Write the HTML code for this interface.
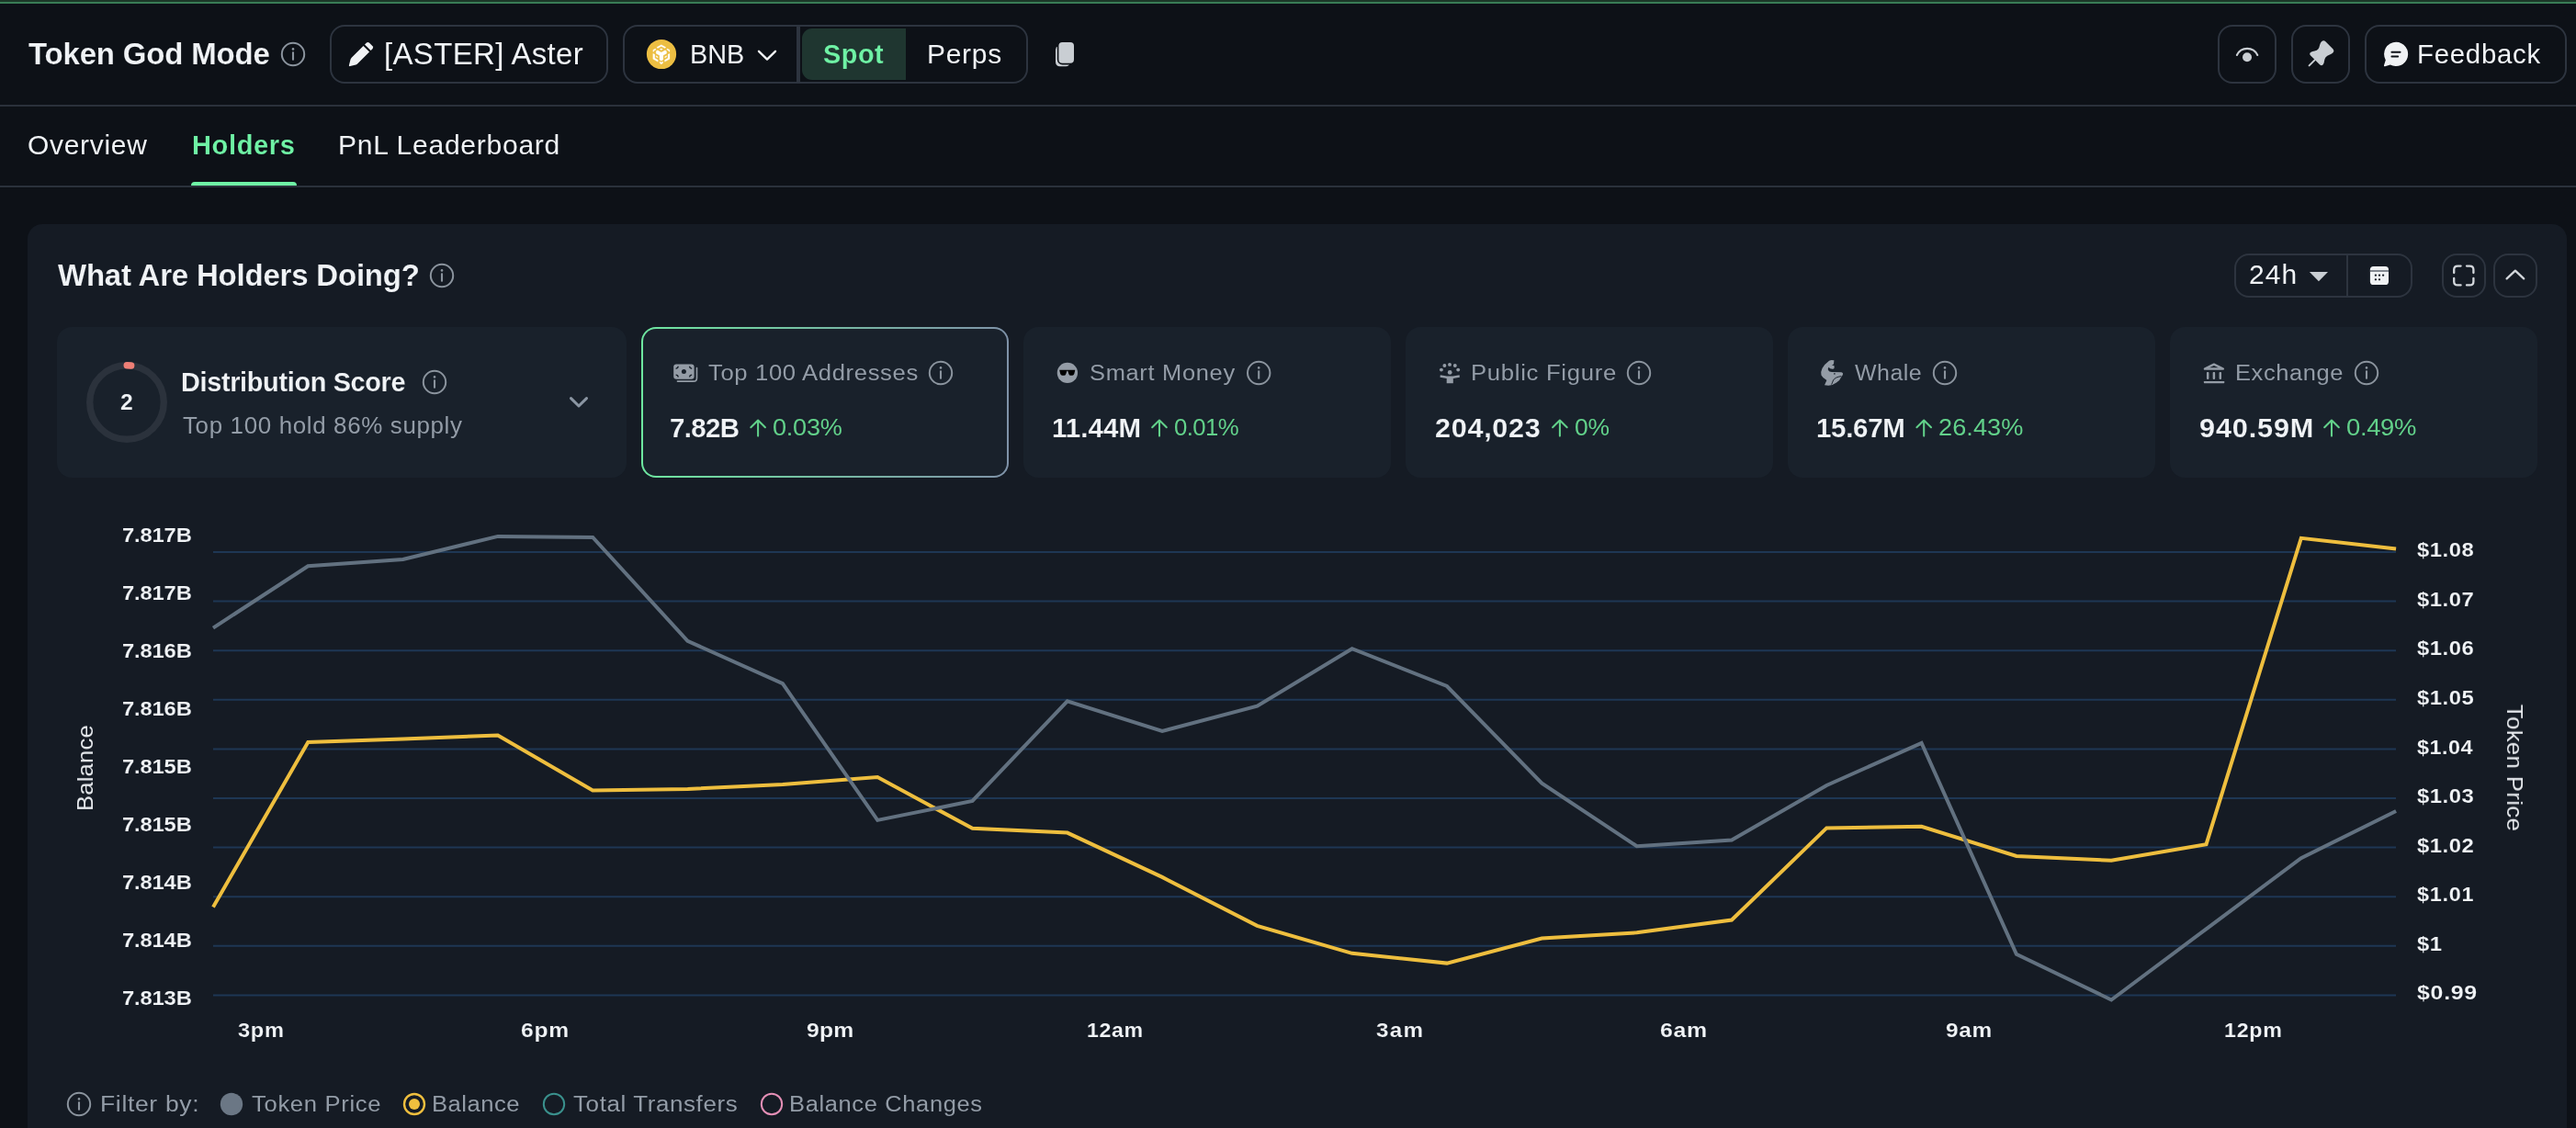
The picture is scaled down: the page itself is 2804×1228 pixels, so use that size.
<!DOCTYPE html>
<html lang="en"><head><meta charset="utf-8"><title>Token God Mode - Holders</title>
<style>
*{box-sizing:border-box;margin:0;padding:0}
html,body{width:2804px;height:1228px;overflow:hidden;background:#0d1117}
body{position:relative;font-family:"Liberation Sans",Arial,sans-serif;color:#f0f3f6}
.tx{position:absolute;white-space:nowrap;line-height:1;display:block;transform-origin:0 50%;will-change:transform}
.abs{position:absolute}
.btn{position:absolute;border:2px solid #2d343f;border-radius:16px;background:transparent}
.topline{position:absolute;left:0;top:0;width:2804px;height:4px;background:linear-gradient(#1c3829 0,#1c3829 50%,#397c55 50%,#397c55 100%)}
.hr{position:absolute;left:0;width:2804px;height:2px;background:#2a313b}
.panel{position:absolute;left:30px;top:244px;width:2764px;height:1000px;background:#151b24;border-radius:16px}
.card{position:absolute;top:356px;height:164px;width:400px;background:#19212b;border-radius:16px}
.card.active{background:linear-gradient(90deg,#6ee7a0,#7f92a8);}
.card.active::before{content:"";position:absolute;left:2px;top:2px;right:2px;bottom:2px;background:#19212b;border-radius:14px}
svg{position:absolute;overflow:visible}
.rot{position:absolute;white-space:nowrap;line-height:1;font-size:24px;color:#e6e9ed;transform-origin:center center;will-change:transform}
</style></head>
<body>
<div class="topline"></div>
<header>
<div class="btn" style="left:359px;top:27px;width:303px;height:64px"></div>
<div class="btn" style="left:678px;top:27px;width:191px;height:64px;border-radius:16px 0 0 16px"></div>
<div class="btn" style="left:869px;top:27px;width:250px;height:64px;border-radius:0 16px 16px 0"></div>
<div class="abs" style="left:873px;top:31px;width:113px;height:56px;background:#1f3630;border-radius:11px 0 0 11px"></div>
<div class="btn" style="left:2414px;top:27px;width:64px;height:64px"></div>
<div class="btn" style="left:2494px;top:27px;width:64px;height:64px"></div>
<div class="btn" style="left:2574px;top:27px;width:220px;height:64px"></div>
<span id="h_title" class="tx" style="left:31.00px;top:43.01px;font-size:32.96px;letter-spacing:-0.154px;color:#f0f3f6;font-weight:700;-webkit-text-stroke:0.12px #0d1117;">Token God Mode</span>
<span id="h_aster" class="tx" style="left:418.00px;top:43.01px;font-size:32.96px;letter-spacing:0.358px;color:#f0f3f6;">[ASTER] Aster</span>
<span id="h_bnb" class="tx" style="left:751.00px;top:45.01px;font-size:28.84px;letter-spacing:0.000px;color:#f0f3f6;">BNB</span>
<span id="h_spot" class="tx" style="left:896.00px;top:45.01px;font-size:28.84px;letter-spacing:0.533px;color:#6ff2a5;font-weight:700;-webkit-text-stroke:0.12px #1f3630;">Spot</span>
<span id="h_perps" class="tx" style="left:1009.00px;top:45.01px;font-size:28.84px;letter-spacing:0.673px;color:#f0f3f6;transform:scaleX(1.0401);">Perps</span>
<span id="h_feedback" class="tx" style="left:2631.00px;top:45.01px;font-size:28.84px;letter-spacing:0.721px;color:#f0f3f6;transform:scaleX(1.0189);">Feedback</span>
<svg width="2804" height="1228" viewBox="0 0 2804 1228" style="left:0;top:0;pointer-events:none" fill="none"><g stroke="#8b949e" stroke-width="2" fill="none"><circle cx="319" cy="59" r="12.2"/><line x1="319" y1="56.4" x2="319" y2="65.6" stroke-width="2.1"/></g><circle cx="319" cy="53.4" r="1.3" fill="#8b949e"/><path fill="#f0f2f4" d="M395.5,49.9 L402.1,56.6 L389.3,69.3 Q388.5,70.1 387.4,70.4 L381,72.1 Q379.6,72.4 379.9,71 L381.6,64.6 Q381.9,63.5 382.7,62.7 Z"/><path fill="#f0f2f4" d="M397,48.5 L399,46.5 Q400.4,45.3 401.9,46.6 L405.6,50.3 Q406.8,51.7 405.6,53.1 L403.6,55.1 Z"/><circle cx="720" cy="59" r="16.1" fill="#ecbe42"/><g transform="translate(700,40) scale(0.033698)" fill="#fff" stroke="#fff" stroke-width="8" stroke-linejoin="round"><polygon points="440,342 588,256 738,342 703,373 588,314 473,373"/><polygon points="540,405 588,379 636,405 588,431"/><polygon points="322,425 398,384 420,412 352,452 352,472 322,490"/><polygon points="858,425 782,384 760,412 828,452 828,472 858,490"/><polygon points="320,540 378,572 378,690 482,750 482,812 320,722"/><polygon points="860,540 802,572 802,690 698,750 698,812 860,722"/><polygon points="540,800 588,828 640,800 640,850 588,888 540,850"/><polygon points="422,612 478,645 478,684 422,651"/><polygon points="758,612 702,645 702,684 758,651"/><path d="M420,485 Q422,452 470,440 L590,508 L710,440 Q758,452 760,485 L760,540 L648,603 L648,745 L590,778 L532,745 L532,603 L420,540 Z"/></g><path d="M826,55.8 L835,64.6 L844,55.8" stroke="#f0f2f4" stroke-width="2.4" stroke-linecap="round" stroke-linejoin="round"/><rect x="1149" y="50" width="15.7" height="22.3" rx="4.5" fill="#c9ced3"/><rect x="1152.4" y="45.9" width="16.6" height="22.9" rx="4" fill="#c9ced3" stroke="#0d1117" stroke-width="3.2" paint-order="stroke"/><path d="M2434.9,60 A12.4,12.4 0 0 1 2457.3,60" stroke="#c9ced3" stroke-width="2.1" stroke-linecap="round"/><circle cx="2446" cy="62.2" r="5" fill="#c9ced3"/><path fill="#c9ced3" d="M2527,45.2 Q2529.3,43.2 2531.4,45.3 L2539.6,53.4 Q2541.3,55.3 2539.6,57.2 Q2538.2,58.7 2536,59.6 Q2532.8,60.8 2531.6,62.2 Q2530.4,63.6 2530,66.5 Q2529.8,68.6 2528.9,70 Q2527.2,72.3 2525.2,70.5 L2514.9,60.2 Q2513.2,58.2 2515.5,56.7 Q2517,55.8 2519.5,55.4 Q2522.2,55 2523.3,53.6 Q2524.5,52.2 2525.1,49 Q2525.6,46.6 2527,45.2 Z"/><path d="M2519.6,65.4 L2513.6,71.4" stroke="#c9ced3" stroke-width="2" stroke-linecap="round"/><path fill="#f0f2f4" d="M2608.2,45.8 A13.1,13.1 0 1 1 2601.8,70.4 L2596.2,72.2 Q2594.6,72.6 2595,71 L2596.8,65.4 A13.1,13.1 0 0 1 2608.2,45.8 Z"/><path d="M2603.4,56.8 H2612.6 M2603.4,61.5 H2610.2" stroke="#0d1117" stroke-width="1.9" stroke-linecap="round"/></svg>
</header>
<div class="hr" style="top:114px"></div>
<nav>
<span id="tab_overview" class="tx" style="left:30.00px;top:143.60px;font-size:28.84px;letter-spacing:0.694px;color:#f0f3f6;transform:scaleX(1.0390);">Overview</span>
<span id="tab_holders" class="tx" style="left:209.00px;top:143.60px;font-size:28.84px;letter-spacing:0.622px;color:#6ff2a5;font-weight:700;-webkit-text-stroke:0.12px #0d1117;transform:scaleX(1.0081);">Holders</span>
<span id="tab_pnl" class="tx" style="left:368.00px;top:143.60px;font-size:28.84px;letter-spacing:0.694px;color:#f0f3f6;transform:scaleX(1.0426);">PnL Leaderboard</span>
<div class="abs" style="left:208px;top:197.5px;width:115.4px;height:4.7px;background:#6ff2a5;border-radius:4px 4px 0 0;z-index:2"></div>
</nav>
<div class="hr" style="top:202px"></div>
<main>
<section class="panel"></section>
<span id="p_title" class="tx" style="left:63.00px;top:284.01px;font-size:32.96px;letter-spacing:-0.182px;color:#f0f3f6;font-weight:700;-webkit-text-stroke:0.12px #151b24;">What Are Holders Doing?</span>
<span id="p_24h" class="tx" style="left:2448.00px;top:285.22px;font-size:28.84px;letter-spacing:1.010px;color:#f0f3f6;transform:scaleX(1.0393);">24h</span>
<svg width="2804" height="1228" viewBox="0 0 2804 1228" style="left:0;top:0;pointer-events:none" fill="none"><g stroke="#8b949e" stroke-width="2" fill="none"><circle cx="481" cy="300" r="12.2"/><line x1="481" y1="297.4" x2="481" y2="306.6" stroke-width="2.1"/></g><circle cx="481" cy="294.4" r="1.3" fill="#8b949e"/><path d="M2513.9,296.1 H2534 L2523.95,306.2 Z" fill="#c9ced3"/><rect x="2579.9" y="289.9" width="20.1" height="20.1" rx="3.6" fill="#f0f2f4"/><rect x="2579.9" y="294.3" width="20.1" height="1.4" fill="#555c66"/><circle cx="2585.9" cy="299.7" r="1.15" fill="#151b24"/><circle cx="2590" cy="299.7" r="1.15" fill="#151b24"/><circle cx="2594.1" cy="299.7" r="1.15" fill="#151b24"/><circle cx="2585.9" cy="304.3" r="1.15" fill="#151b24"/><circle cx="2590" cy="304.3" r="1.15" fill="#151b24"/><g stroke="#d3d7dc" stroke-width="2.3" stroke-linecap="round" fill="none"><path d="M2671.2,297.0 V293.6 Q2671.2,289.6 2675.2,289.6 H2678.6"/><path d="M2685.0,289.6 H2688.4 Q2692.4,289.6 2692.4,293.6 V297.0"/><path d="M2692.4,303.0 V306.4 Q2692.4,310.4 2688.4,310.4 H2685.0"/><path d="M2678.6,310.4 H2675.2 Q2671.2,310.4 2671.2,306.4 V303.0"/></g><path d="M2728.6,303.4 L2737.9,294.6 L2747.2,303.4" stroke="#d3d7dc" stroke-width="2.3" stroke-linecap="round" stroke-linejoin="round"/></svg>
<div class="btn" style="left:2432px;top:276px;width:194px;height:48px;border-radius:16px"></div>
<div class="abs" style="left:2554px;top:277px;width:2px;height:46px;background:#2d343f"></div>
<div class="btn" style="left:2658px;top:276px;width:48px;height:48px;border-radius:16px"></div>
<div class="btn" style="left:2714px;top:276px;width:48px;height:48px;border-radius:16px"></div>

<article class="card" style="left:62px;width:620px"></article>
<span id="d_num" class="tx" style="left:131.00px;top:425.60px;font-size:24.72px;letter-spacing:0.000px;color:#f0f3f6;font-weight:700;-webkit-text-stroke:0.12px #19212b;">2</span>
<span id="d_title" class="tx" style="left:197.00px;top:402.41px;font-size:28.84px;letter-spacing:-0.312px;color:#f0f3f6;font-weight:700;-webkit-text-stroke:0.12px #19212b;">Distribution Score</span>
<span id="d_sub" class="tx" style="left:199.00px;top:451.31px;font-size:25.75px;letter-spacing:0.635px;color:#939ca7;transform:scaleX(1.0074);">Top 100 hold 86% supply</span>
<svg width="2804" height="1228" viewBox="0 0 2804 1228" style="left:0;top:0;pointer-events:none" fill="none"><circle cx="138" cy="438" r="40.3" stroke="#2b323c" stroke-width="7.4"/><path d="M138.2,397.7 A40.3,40.3 0 0 1 142.7,397.97" stroke="#ee7f76" stroke-width="7.4" stroke-linecap="round"/><g stroke="#8b949e" stroke-width="2" fill="none"><circle cx="473" cy="416" r="12.2"/><line x1="473" y1="413.4" x2="473" y2="422.6" stroke-width="2.1"/></g><circle cx="473" cy="410.4" r="1.3" fill="#8b949e"/><path d="M621.5,433.6 L630,442 L638.5,433.6" stroke="#8b96a3" stroke-width="3" stroke-linecap="round" stroke-linejoin="round"/></svg>
<article class="card active" style="left:698px"></article>
<article class="card" style="left:1114px"></article>
<article class="card" style="left:1530px"></article>
<article class="card" style="left:1946px"></article>
<article class="card" style="left:2362px"></article>
<span id="c1_lab" class="tx" style="left:771.00px;top:394.01px;font-size:24.72px;letter-spacing:0.618px;color:#939ca7;transform:scaleX(1.0369);">Top 100 Addresses</span>
<span id="c1_val" class="tx" style="left:729.00px;top:451.31px;font-size:29.46px;letter-spacing:-0.625px;color:#f0f3f6;font-weight:700;-webkit-text-stroke:0.12px #19212b;">7.82B</span>
<span id="c1_pct" class="tx" style="left:841.00px;top:453.31px;font-size:25.75px;letter-spacing:-0.237px;color:#62d18a;transform:scaleX(1.0528);">0.03%</span>
<span id="c2_lab" class="tx" style="left:1186.00px;top:394.01px;font-size:24.72px;letter-spacing:0.657px;color:#939ca7;transform:scaleX(1.0297);">Smart Money</span>
<span id="c2_val" class="tx" style="left:1145.00px;top:451.31px;font-size:29.46px;letter-spacing:0.100px;color:#f0f3f6;font-weight:700;-webkit-text-stroke:0.12px #19212b;">11.44M</span>
<span id="c2_pct" class="tx" style="left:1278.00px;top:453.31px;font-size:25.75px;letter-spacing:-0.600px;color:#62d18a;">0.01%</span>
<span id="c3_lab" class="tx" style="left:1601.00px;top:394.01px;font-size:24.72px;letter-spacing:0.666px;color:#939ca7;transform:scaleX(1.0394);">Public Figure</span>
<span id="c3_val" class="tx" style="left:1562.00px;top:451.31px;font-size:29.46px;letter-spacing:0.704px;color:#f0f3f6;font-weight:700;-webkit-text-stroke:0.12px #19212b;transform:scaleX(1.0366);">204,023</span>
<span id="c3_pct" class="tx" style="left:1714.00px;top:453.31px;font-size:25.75px;letter-spacing:-0.160px;color:#62d18a;transform:scaleX(1.0279);">0%</span>
<span id="c4_lab" class="tx" style="left:2019.00px;top:394.01px;font-size:24.72px;letter-spacing:0.470px;color:#939ca7;transform:scaleX(1.0102);">Whale</span>
<span id="c4_val" class="tx" style="left:1977.00px;top:451.31px;font-size:29.46px;letter-spacing:-0.280px;color:#f0f3f6;font-weight:700;-webkit-text-stroke:0.12px #19212b;">15.67M</span>
<span id="c4_pct" class="tx" style="left:2110.00px;top:453.31px;font-size:25.75px;letter-spacing:0.086px;color:#62d18a;transform:scaleX(1.0526);">26.43%</span>
<span id="c5_lab" class="tx" style="left:2433.00px;top:394.01px;font-size:24.72px;letter-spacing:0.563px;color:#939ca7;transform:scaleX(1.0313);">Exchange</span>
<span id="c5_val" class="tx" style="left:2394.00px;top:451.31px;font-size:29.46px;letter-spacing:0.801px;color:#f0f3f6;font-weight:700;-webkit-text-stroke:0.12px #19212b;transform:scaleX(1.0410);">940.59M</span>
<span id="c5_pct" class="tx" style="left:2554.00px;top:453.31px;font-size:25.75px;letter-spacing:-0.322px;color:#62d18a;transform:scaleX(1.0643);">0.49%</span>
<svg width="2804" height="1228" viewBox="0 0 2804 1228" style="left:0;top:0;pointer-events:none" fill="none"><path d="M758.5,400.6 V411.4 Q758.5,415.1 754.8,415.1 H737.4" stroke="#949ca6" stroke-width="1.6" stroke-linecap="round"/><rect x="733.2" y="396.6" width="22.4" height="16.1" rx="3" fill="#949ca6"/><circle cx="744.4" cy="404.6" r="2.5" fill="#19212b"/><g stroke="#19212b" stroke-width="1.4" fill="none"><path d="M735.6,401.2 A2.6,2.6 0 0 0 738.2,398.8"/><path d="M750.6,398.8 A2.6,2.6 0 0 0 753.2,401.2"/><path d="M735.6,408.1 A2.6,2.6 0 0 1 738.2,410.5"/><path d="M750.6,410.5 A2.6,2.6 0 0 1 753.2,408.1"/></g><g stroke="#8b949e" stroke-width="2" fill="none"><circle cx="1024" cy="406" r="12.2"/><line x1="1024" y1="403.4" x2="1024" y2="412.6" stroke-width="2.1"/></g><circle cx="1024" cy="400.4" r="1.3" fill="#8b949e"/><circle cx="1161.9" cy="405.9" r="11.15" fill="#949ca6"/><path fill="#000" d="M1153.2,402.8 H1170.3 L1169.3,407 Q1168.8,408.8 1167.2,408.8 H1165.3 Q1163.9,408.8 1163.4,407.2 L1162.3,403.7 H1161.4 L1160.2,407.2 Q1159.7,408.8 1158.3,408.8 H1156.3 Q1154.7,408.8 1154.2,407 Z"/><g stroke="#8b949e" stroke-width="2" fill="none"><circle cx="1370.2" cy="406" r="12.2"/><line x1="1370.2" y1="403.4" x2="1370.2" y2="412.6" stroke-width="2.1"/></g><circle cx="1370.2" cy="400.4" r="1.3" fill="#8b949e"/><circle cx="1568.9" cy="402.6" r="1.95" fill="#949ca6"/><circle cx="1572.4" cy="398" r="1.95" fill="#949ca6"/><circle cx="1578" cy="396.9" r="1.95" fill="#949ca6"/><circle cx="1583.8" cy="398" r="1.95" fill="#949ca6"/><circle cx="1587.2" cy="402.6" r="1.95" fill="#949ca6"/><circle cx="1578.2" cy="405.4" r="2.4" fill="#949ca6"/><path fill="#949ca6" d="M1567.8,408.2 L1575,409.4 H1581.5 L1588.6,408.2 L1588.9,410.7 L1581.8,412 V417.2 H1574.7 V412 L1567.5,410.7 Z"/><g stroke="#8b949e" stroke-width="2" fill="none"><circle cx="1784" cy="406" r="12.2"/><line x1="1784" y1="403.4" x2="1784" y2="412.6" stroke-width="2.1"/></g><circle cx="1784" cy="400.4" r="1.3" fill="#8b949e"/><path fill="#949ca6" d="M1993.4,392 L1996.4,392.3 L1996,396.3 L1994,397.8 L1996.5,398 L1996.7,400.4 Q1996.2,401.8 1994.8,401.8 L1992.2,401.2 L1990.5,399.7 Q1989.3,401.5 1990,403 Q1991,405 1994,405.1 L2004.5,405.3 Q2006.3,405.6 2006.1,407.2 Q2005.6,409 2004.5,410 Q2003,414 1999,416.5 Q1995,419.5 1990.3,419.8 L1986,419.3 L1988.4,414 Q1984,411.5 1982.5,408.5 Q1981.5,405 1983.5,401 Q1986,396.5 1991,392.8 Z"/><path d="M2004.3,409.6 Q1997.5,410.5 1995.5,414 Q1994.8,416 1993.6,418.6" stroke="#19212b" stroke-width="1"/><circle cx="1996.9" cy="406.9" r="0.8" fill="#19212b"/><g stroke="#8b949e" stroke-width="2" fill="none"><circle cx="2117" cy="406" r="12.2"/><line x1="2117" y1="403.4" x2="2117" y2="412.6" stroke-width="2.1"/></g><circle cx="2117" cy="400.4" r="1.3" fill="#8b949e"/><path d="M2409.9,396.7 L2419.9,401.5 H2399.9 Z" stroke="#949ca6" stroke-width="2.4" stroke-linejoin="round"/><rect x="2401.95" y="405.1" width="2.5" height="7.8" rx="0.8" fill="#949ca6"/><rect x="2408.65" y="405.1" width="2.5" height="7.8" rx="0.8" fill="#949ca6"/><rect x="2415.55" y="405.1" width="2.5" height="7.8" rx="0.8" fill="#949ca6"/><rect x="2398.9" y="415" width="22.4" height="2.2" rx="0.6" fill="#949ca6"/><g stroke="#8b949e" stroke-width="2" fill="none"><circle cx="2576" cy="406" r="12.2"/><line x1="2576" y1="403.4" x2="2576" y2="412.6" stroke-width="2.1"/></g><circle cx="2576" cy="400.4" r="1.3" fill="#8b949e"/><g stroke="#62d18a" stroke-width="2.05" stroke-linecap="round" stroke-linejoin="round" fill="none"><path d="M825.1,457.6 V474.6 M817.3000000000001,465.2 L825.1,457.5 L832.9,465.2"/></g><g stroke="#62d18a" stroke-width="2.05" stroke-linecap="round" stroke-linejoin="round" fill="none"><path d="M1262,457.6 V474.6 M1254.2,465.2 L1262,457.5 L1269.8,465.2"/></g><g stroke="#62d18a" stroke-width="2.05" stroke-linecap="round" stroke-linejoin="round" fill="none"><path d="M1697.9,457.6 V474.6 M1690.1000000000001,465.2 L1697.9,457.5 L1705.7,465.2"/></g><g stroke="#62d18a" stroke-width="2.05" stroke-linecap="round" stroke-linejoin="round" fill="none"><path d="M2094.2,457.6 V474.6 M2086.3999999999996,465.2 L2094.2,457.5 L2102.0,465.2"/></g><g stroke="#62d18a" stroke-width="2.05" stroke-linecap="round" stroke-linejoin="round" fill="none"><path d="M2538,457.6 V474.6 M2530.2,465.2 L2538,457.5 L2545.8,465.2"/></g></svg>

<figure>
<svg width="2804" height="1228" viewBox="0 0 2804 1228" style="left:0;top:0" fill="none"><g stroke="#1e3754" stroke-width="2"><line x1="232" x2="2608" y1="601.0" y2="601.0"/><line x1="232" x2="2608" y1="654.6" y2="654.6"/><line x1="232" x2="2608" y1="708.2" y2="708.2"/><line x1="232" x2="2608" y1="761.8" y2="761.8"/><line x1="232" x2="2608" y1="815.4" y2="815.4"/><line x1="232" x2="2608" y1="869.0" y2="869.0"/><line x1="232" x2="2608" y1="922.6" y2="922.6"/><line x1="232" x2="2608" y1="976.2" y2="976.2"/><line x1="232" x2="2608" y1="1029.8" y2="1029.8"/><line x1="232" x2="2608" y1="1083.4" y2="1083.4"/></g><polyline points="232.0,987.5 335.3,808.0 438.6,804.6 541.9,800.5 645.2,860.5 748.5,859.0 851.9,854.0 955.2,846.1 1058.5,901.8 1161.8,906.6 1265.1,954.9 1368.4,1007.9 1471.7,1037.8 1575.0,1048.6 1678.3,1021.5 1781.7,1015.3 1885.0,1001.5 1988.3,901.4 2091.6,899.8 2194.9,932.0 2298.2,936.8 2401.5,919.2 2504.8,585.8 2608.1,597.5" stroke="#eebe3e" stroke-width="4" stroke-linejoin="miter" stroke-linecap="butt"/><polyline points="232.0,683.6 335.3,616.2 438.6,608.9 541.9,583.9 645.2,585.0 748.5,697.8 851.9,744.2 955.2,892.9 1058.5,872.0 1161.8,763.3 1265.1,795.9 1368.4,768.7 1471.7,706.2 1575.0,747.0 1678.3,852.6 1781.7,921.2 1885.0,914.5 1988.3,855.0 2091.6,808.9 2194.9,1038.8 2298.2,1088.5 2401.5,1011.3 2504.8,934.1 2608.1,883.0" stroke="#627180" stroke-width="4" stroke-linejoin="miter" stroke-linecap="butt"/></svg>
<span id="yl0" class="tx" style="left:133.00px;top:571.01px;font-size:22.66px;letter-spacing:-0.171px;color:#f0f3f6;font-weight:700;-webkit-text-stroke:0.12px #151b24;transform:scaleX(1.0500);">7.817B</span>
<span id="yl1" class="tx" style="left:133.00px;top:634.01px;font-size:22.66px;letter-spacing:-0.171px;color:#f0f3f6;font-weight:700;-webkit-text-stroke:0.12px #151b24;transform:scaleX(1.0500);">7.817B</span>
<span id="yl2" class="tx" style="left:133.00px;top:697.01px;font-size:22.66px;letter-spacing:-0.171px;color:#f0f3f6;font-weight:700;-webkit-text-stroke:0.12px #151b24;transform:scaleX(1.0500);">7.816B</span>
<span id="yl3" class="tx" style="left:133.00px;top:760.01px;font-size:22.66px;letter-spacing:-0.171px;color:#f0f3f6;font-weight:700;-webkit-text-stroke:0.12px #151b24;transform:scaleX(1.0500);">7.816B</span>
<span id="yl4" class="tx" style="left:133.00px;top:823.01px;font-size:22.66px;letter-spacing:-0.171px;color:#f0f3f6;font-weight:700;-webkit-text-stroke:0.12px #151b24;transform:scaleX(1.0500);">7.815B</span>
<span id="yl5" class="tx" style="left:133.00px;top:886.01px;font-size:22.66px;letter-spacing:-0.171px;color:#f0f3f6;font-weight:700;-webkit-text-stroke:0.12px #151b24;transform:scaleX(1.0500);">7.815B</span>
<span id="yl6" class="tx" style="left:133.00px;top:949.01px;font-size:22.66px;letter-spacing:-0.171px;color:#f0f3f6;font-weight:700;-webkit-text-stroke:0.12px #151b24;transform:scaleX(1.0500);">7.814B</span>
<span id="yl7" class="tx" style="left:133.00px;top:1012.01px;font-size:22.66px;letter-spacing:-0.171px;color:#f0f3f6;font-weight:700;-webkit-text-stroke:0.12px #151b24;transform:scaleX(1.0500);">7.814B</span>
<span id="yl8" class="tx" style="left:133.00px;top:1075.01px;font-size:22.66px;letter-spacing:-0.171px;color:#f0f3f6;font-weight:700;-webkit-text-stroke:0.12px #151b24;transform:scaleX(1.0500);">7.813B</span>
<span id="yr0" class="tx" style="left:2631.00px;top:587.20px;font-size:22.66px;letter-spacing:0.471px;color:#f0f3f6;font-weight:700;-webkit-text-stroke:0.12px #151b24;transform:scaleX(1.0523);">$1.08</span>
<span id="yr1" class="tx" style="left:2631.00px;top:640.79px;font-size:22.66px;letter-spacing:0.471px;color:#f0f3f6;font-weight:700;-webkit-text-stroke:0.12px #151b24;transform:scaleX(1.0523);">$1.07</span>
<span id="yr2" class="tx" style="left:2631.00px;top:694.37px;font-size:22.66px;letter-spacing:0.471px;color:#f0f3f6;font-weight:700;-webkit-text-stroke:0.12px #151b24;transform:scaleX(1.0523);">$1.06</span>
<span id="yr3" class="tx" style="left:2631.00px;top:747.95px;font-size:22.66px;letter-spacing:0.471px;color:#f0f3f6;font-weight:700;-webkit-text-stroke:0.12px #151b24;transform:scaleX(1.0523);">$1.05</span>
<span id="yr4" class="tx" style="left:2631.00px;top:801.54px;font-size:22.66px;letter-spacing:0.470px;color:#f0f3f6;font-weight:700;-webkit-text-stroke:0.12px #151b24;transform:scaleX(1.0344);">$1.04</span>
<span id="yr5" class="tx" style="left:2631.00px;top:855.11px;font-size:22.66px;letter-spacing:0.471px;color:#f0f3f6;font-weight:700;-webkit-text-stroke:0.12px #151b24;transform:scaleX(1.0523);">$1.03</span>
<span id="yr6" class="tx" style="left:2631.00px;top:908.68px;font-size:22.66px;letter-spacing:0.471px;color:#f0f3f6;font-weight:700;-webkit-text-stroke:0.12px #151b24;transform:scaleX(1.0523);">$1.02</span>
<span id="yr7" class="tx" style="left:2631.00px;top:962.27px;font-size:22.66px;letter-spacing:0.712px;color:#f0f3f6;font-weight:700;-webkit-text-stroke:0.12px #151b24;transform:scaleX(1.0344);">$1.01</span>
<span id="yr8" class="tx" style="left:2631.00px;top:1015.84px;font-size:22.66px;letter-spacing:0.566px;color:#f0f3f6;font-weight:700;-webkit-text-stroke:0.12px #151b24;transform:scaleX(1.0523);">$1</span>
<span id="yr9" class="tx" style="left:2631.00px;top:1069.43px;font-size:22.66px;letter-spacing:0.641px;color:#f0f3f6;font-weight:700;-webkit-text-stroke:0.12px #151b24;transform:scaleX(1.1000);">$0.99</span>
<span id="xl0" class="tx" style="left:259.00px;top:1109.90px;font-size:22.66px;letter-spacing:0.662px;color:#f0f3f6;font-weight:700;-webkit-text-stroke:0.12px #151b24;transform:scaleX(1.0421);">3pm</span>
<span id="xl1" class="tx" style="left:567.00px;top:1109.90px;font-size:22.66px;letter-spacing:0.659px;color:#f0f3f6;font-weight:700;-webkit-text-stroke:0.12px #151b24;transform:scaleX(1.0867);">6pm</span>
<span id="xl2" class="tx" style="left:878.00px;top:1109.90px;font-size:22.66px;letter-spacing:0.201px;color:#f0f3f6;font-weight:700;-webkit-text-stroke:0.12px #151b24;transform:scaleX(1.0932);">9pm</span>
<span id="xl3" class="tx" style="left:1183.00px;top:1109.90px;font-size:22.66px;letter-spacing:0.567px;color:#f0f3f6;font-weight:700;-webkit-text-stroke:0.12px #151b24;transform:scaleX(1.0225);">12am</span>
<span id="xl4" class="tx" style="left:1498.00px;top:1109.90px;font-size:22.66px;letter-spacing:1.222px;color:#f0f3f6;font-weight:700;-webkit-text-stroke:0.12px #151b24;transform:scaleX(1.0677);">3am</span>
<span id="xl5" class="tx" style="left:1807.00px;top:1109.90px;font-size:22.66px;letter-spacing:0.567px;color:#f0f3f6;font-weight:700;-webkit-text-stroke:0.12px #151b24;transform:scaleX(1.0990);">6am</span>
<span id="xl6" class="tx" style="left:2118.00px;top:1109.90px;font-size:22.66px;letter-spacing:0.659px;color:#f0f3f6;font-weight:700;-webkit-text-stroke:0.12px #151b24;transform:scaleX(1.0775);">9am</span>
<span id="xl7" class="tx" style="left:2421.00px;top:1109.90px;font-size:22.66px;letter-spacing:0.697px;color:#f0f3f6;font-weight:700;-webkit-text-stroke:0.12px #151b24;transform:scaleX(1.0255);">12pm</span>
<div id="rot_bal" class="rot" style="left:93.2px;top:835.7px;letter-spacing:0.24px;transform:translate(-50%,-50%) rotate(-90deg) scaleX(1.0616)">Balance</div>
<div id="rot_tp" class="rot" style="left:2737.3px;top:835.6px;letter-spacing:0.39px;transform:translate(-50%,-50%) rotate(90deg) scaleX(1.0672)">Token Price</div>
</figure>
<footer>
<span id="f_by" class="tx" style="left:109.00px;top:1190.41px;font-size:24.72px;letter-spacing:0.618px;color:#939ca7;transform:scaleX(1.0719);">Filter by:</span>
<span id="f_tp" class="tx" style="left:274.00px;top:1190.41px;font-size:24.72px;letter-spacing:0.637px;color:#939ca7;transform:scaleX(1.0365);">Token Price</span>
<span id="f_bal" class="tx" style="left:470.00px;top:1190.41px;font-size:24.72px;letter-spacing:0.457px;color:#939ca7;transform:scaleX(1.0367);">Balance</span>
<span id="f_tt" class="tx" style="left:624.00px;top:1190.41px;font-size:24.72px;letter-spacing:0.550px;color:#939ca7;transform:scaleX(1.0522);">Total Transfers</span>
<span id="f_bc" class="tx" style="left:859.00px;top:1190.41px;font-size:24.72px;letter-spacing:0.632px;color:#939ca7;transform:scaleX(1.0296);">Balance Changes</span>
<svg width="2804" height="1228" viewBox="0 0 2804 1228" style="left:0;top:0;pointer-events:none" fill="none"><g stroke="#8b949e" stroke-width="2" fill="none"><circle cx="86" cy="1202" r="12.2"/><line x1="86" y1="1199.4" x2="86" y2="1208.6" stroke-width="2.1"/></g><circle cx="86" cy="1196.4" r="1.3" fill="#8b949e"/><circle cx="252" cy="1202" r="12.2" fill="#6b7785"/><circle cx="451" cy="1202" r="11" stroke="#efbf3e" stroke-width="2.4"/><circle cx="451" cy="1202" r="6" fill="#efbf3e"/><circle cx="603" cy="1202" r="11.2" stroke="#3a918d" stroke-width="2"/><circle cx="840" cy="1202" r="11.2" stroke="#e48fb6" stroke-width="2"/></svg>
</footer>
</main>
</body></html>
